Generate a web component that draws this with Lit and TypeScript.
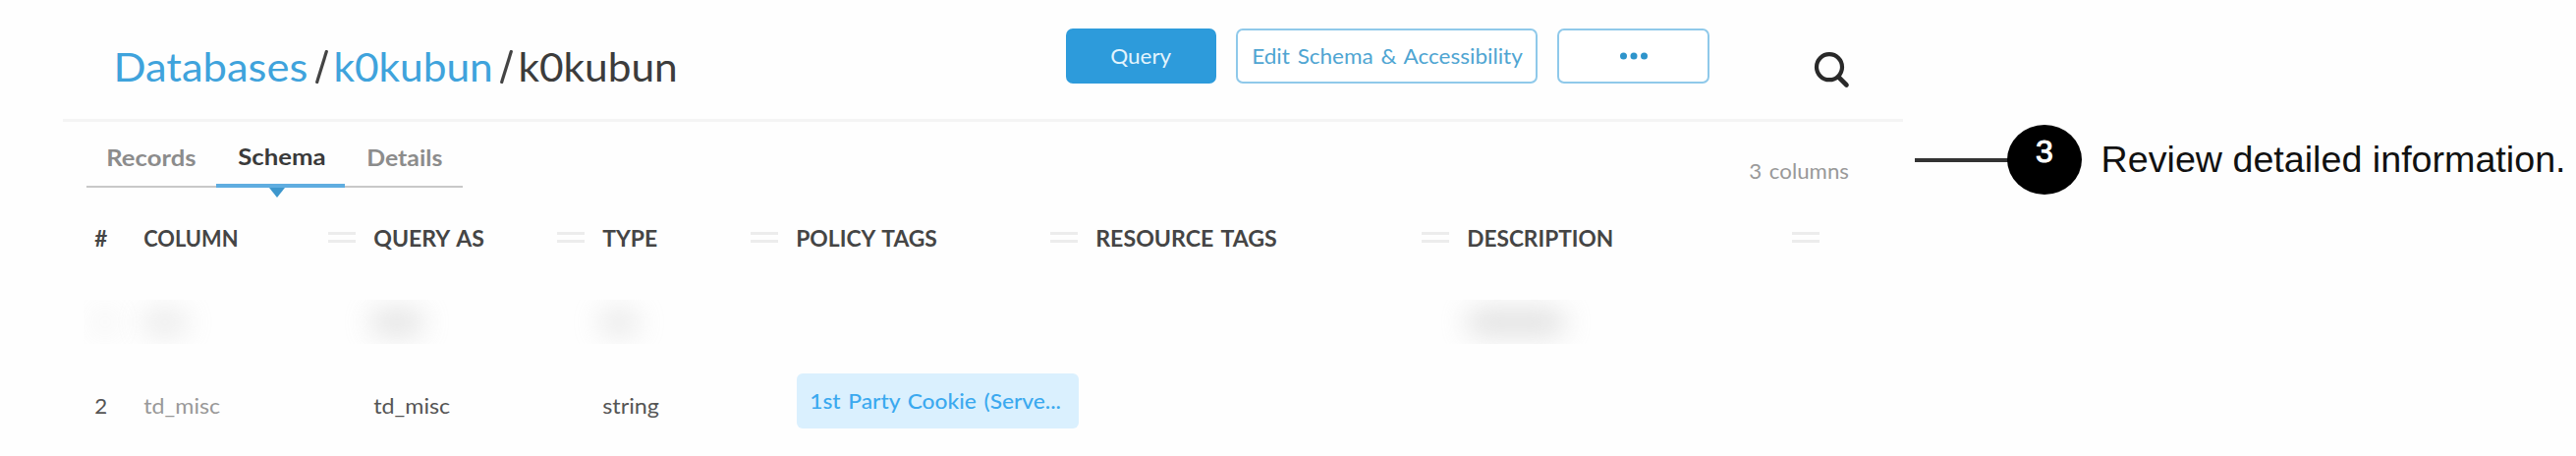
import { LitElement, html, css } from "lit";
import { customElement, property } from "lit/decorators.js";

/** A line of text stretched so that its letters fill the given width. */
@customElement("fit-text")
class FitText extends LitElement {
  @property({ type: Number }) width = 0;
  @property() text = "";

  static styles = css`
    :host { display: block; flex: none; white-space: pre; overflow: visible; }
    .line { display: inline-block; transform-origin: 0 50%; }
  `;

  updated() {
    this.style.width = `${this.width}px`;
    const line = this.renderRoot.querySelector<HTMLElement>(".line")!;
    line.style.transform = "none";
    const natural = line.offsetWidth;
    const em = parseFloat(getComputedStyle(line).fontSize);
    // The side bearings of the outer letters hang outside the box.
    const bearing = em > 30 ? em * 0.065 : em * 0.035;
    line.style.transform = `translateX(${-bearing}px) scaleX(${(this.width + bearing * 1.6) / natural})`;
  }

  render() {
    return html`<span class="line">${this.text}</span>`;
  }
}

const t = (text: string, width: number, cls = "") =>
  html`<fit-text class=${cls} .text=${text} .width=${width}></fit-text>`;

const headings: [string, number][] = [
  ["COLUMN", 95], ["QUERY AS", 111], ["TYPE", 55],
  ["POLICY TAGS", 142], ["RESOURCE TAGS", 183], ["DESCRIPTION", 148],
];

@customElement("app-root")
class AppRoot extends LitElement {
  static styles = css`
    :host {
      display: flex; width: 2622px; height: 464px; overflow: hidden;
      background: #fefefe; color: #444;
      font-family: Lato, "Noto Sans", sans-serif; font-size: 22px;
    }
    * { box-sizing: border-box; }
    .panel { width: 1873px; margin-left: 64px; flex: none; word-spacing: 2px; }
    .top { display: flex; height: 124px; border-bottom: 3px solid #f4f4f4; padding-left: 54px; }
    .crumbs { display: flex; width: 967px; padding-top: 38px; font-size: 40px; line-height: 60px; color: #3c3c3c; }
    .link { color: #3fa3dc; }
    .slash { width: 13px; height: 34px; margin: 13px 8px 0 9px; flex: none; }
    .buttons { display: flex; padding-top: 29px; }
    .btn {
      display: flex; align-items: center; justify-content: center; height: 56px; padding-bottom: 2px;
      border: 2px solid #8fc9ea; border-radius: 7px; color: #4fa5d2; margin-right: 20px; background: #fff;
    }
    .primary { width: 153px; background: #2d9bdb; border-color: #2d9bdb; color: #e3f4fd; }
    .edit { width: 307px; }
    .more { width: 155px; padding-bottom: 0; }
    .search { width: 40px; height: 40px; margin: 51px 0 0 85px; }
    .bar { display: flex; justify-content: space-between; height: 78px; padding: 0 55px 0 24px; }
    .tabs { display: flex; height: 67px; width: 383px; border-bottom: 2px solid #c8c8c8; font-weight: 700; font-size: 22.5px; color: #8c8c8c; line-height: 60px; }
    .tab { display: flex; justify-content: center; padding-top: 7px; height: 67px; }
    .records { width: 132px; padding-right: 1px; }
    .schema { width: 131px; padding: 6px 0 0 2px; color: #3a3a3a; border-bottom: 4px solid #5fade0; position: relative; }
    .schema::after {
      content: ""; position: absolute; left: 54px; top: 67px;
      border: 8px solid transparent; border-top: 10px solid #3d97cd; border-bottom: 0;
    }
    .details { width: 120px; padding-left: 2px; }
    .count { padding-top: 35px; line-height: 30px; color: #999; }
    .row { display: grid; grid-template-columns: 50px 234px 233px 197px 305px 378px 358px; margin-left: 33px; align-items: center; }
    .head { height: 80px; font-weight: 700; color: #454545; line-height: 30px; }
    .head fit-text { padding-top: 2px; }
    .cell { display: flex; justify-content: space-between; align-items: center; padding-right: 19px; }
    .cell:last-child { padding-right: 0; }
    .grip { width: 28px; height: 11px; border: solid #ececec; border-width: 3px 0; margin-bottom: 2px; }
    .masked { height: 45px; margin-top: 23px; overflow: hidden; margin-left: 21px; padding-left: 12px; }
    .smudge { background: #bbb; height: 26px; border-radius: 12px; filter: blur(14px); opacity: .42; }
    .m0 { width: 20px; opacity: .18; }
    .m1 { width: 46px; opacity: .3; margin-left: -2px; }
    .m2 { width: 54px; opacity: .42; margin-left: -4px; }
    .m3 { width: 40px; margin-left: -4px; opacity: .33; }
    .m6 { width: 100px; opacity: .46; margin-left: -1px; }
    .data { height: 56px; margin-top: 30px; line-height: 30px; color: #555; }
    .low { padding-top: 9px; }
    .dim { color: #999; }
    .tag { width: 287px; height: 56px; border-radius: 6px; background: #daf0fe; color: #3ba9ef; padding: 13px 0 0 14px; font-weight: 500; }
    .note { display: flex; align-items: center; height: 72px; margin: 126px 0 0 12px; font-family: "Liberation Sans", Arial, sans-serif; color: #111; }
    .rule { width: 95px; height: 4px; background: #333; margin-top: 2px; }
    .num { display: flex; justify-content: center; width: 76px; height: 71px; margin-left: -1px; border-radius: 50%; background: #000; color: #fff; font-size: 32px; line-height: 54px; -webkit-text-stroke: 1px #fff; }
    .caption { font-size: 37.5px; margin-left: 22px; }
  `;

  slash() {
    return html`<svg class="slash" viewBox="0 0 13 34"><path d="M11.3 1.5 1.7 32.5" stroke="#444" stroke-width="3.2" stroke-linecap="round"/></svg>`;
  }

  render() {
    return html`
      <main class="panel">
        <header class="top">
          <nav class="crumbs">
            ${t("Databases", 194, "link")}${this.slash()}
            ${t("k0kubun", 158, "link")}${this.slash()}
            ${t("k0kubun", 158)}
          </nav>
          <div class="buttons">
            <div class="btn primary">${t("Query", 61)}</div>
            <div class="btn edit">${t("Edit Schema & Accessibility", 274)}</div>
            <div class="btn more">
              <svg width="30" height="8" viewBox="0 0 30 8" fill="#2e94cb"><circle cx="4.5" cy="4" r="3.5"/><circle cx="15" cy="4" r="3.5"/><circle cx="25.5" cy="4" r="3.5"/></svg>
            </div>
          </div>
          <svg class="search" viewBox="0 0 40 40" fill="none" stroke="#292929">
            <circle cx="17" cy="17.2" r="13" stroke-width="4.2"/>
            <path d="m26.5 27.5 8 8" stroke-width="4.6" stroke-linecap="round"/>
          </svg>
        </header>
        <section class="bar">
          <div class="tabs">
            <div class="tab records">${t("Records", 90)}</div>
            <div class="tab schema">${t("Schema", 88)}</div>
            <div class="tab details">${t("Details", 76)}</div>
          </div>
          <div class="count">${t("3 columns", 101)}</div>
        </section>
        <section class="row head">
          ${t("#", 12)}
          ${headings.map(([name, w]) => html`<div class="cell">${t(name, w)}<i class="grip"></i></div>`)}
        </section>
        <section class="row masked">
          <div class="smudge m0"></div><div class="smudge m1"></div><div class="smudge m2"></div>
          <div class="smudge m3"></div><div></div><div></div><div class="smudge m6"></div>
        </section>
        <section class="row data">
          ${t("2", 12, "low")}${t("td_misc", 77, "low dim")}${t("td_misc", 77, "low")}${t("string", 56, "low")}
          <div class="tag">${t("1st Party Cookie (Serve...", 254)}</div>
        </section>
      </main>
      <aside class="note">
        <div class="rule"></div>
        <div class="num">3</div>
        ${t("Review detailed information.", 469, "caption")}
      </aside>
    `;
  }
}
